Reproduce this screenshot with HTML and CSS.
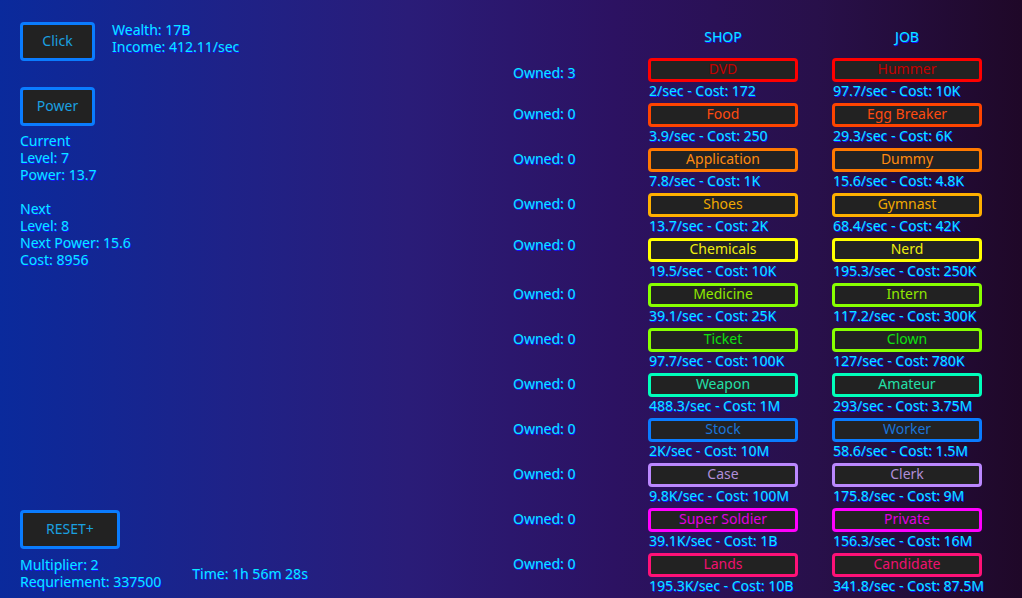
FILE: index.html
```html
<!DOCTYPE html>
<html>
<head>
<meta charset="utf-8">
<link rel="stylesheet" href="styles.css">
</head>
<body>
<div class="page">
  <div class="left">
    <div class="top">
      <div class="click-row">
        <button class="btn btn-click">Click</button>
        <div class="stats">
          <div>Wealth: 17B</div>
          <div>Income: 412.11/sec</div>
        </div>
      </div>
      <button class="btn btn-power">Power</button>
      <div class="power-info">
        <div>Current</div>
        <div>Level: 7</div>
        <div>Power: 13.7</div>
        <div class="blank"></div>
        <div>Next</div>
        <div>Level: 8</div>
        <div>Next Power: 15.6</div>
        <div>Cost: 8956</div>
      </div>
    </div>
    <div class="bottom">
      <button class="btn btn-reset">RESET+</button>
      <div class="reset-row">
        <div class="reset-info">
          <div>Multiplier: 2</div>
          <div>Requriement: 337500</div>
        </div>
        <div class="time">Time: 1h 56m 28s</div>
      </div>
    </div>
  </div>

  <div class="market">
    <div class="heads">
      <div class="owned-head"></div>
      <div class="head">SHOP</div>
      <div class="head">JOB</div>
    </div>

    <div class="row r1">
      <div class="owned">Owned: 3</div>
      <div class="item"><div class="ib c-red">DVD</div><div class="info">2/sec - Cost: 172</div></div>
      <div class="item"><div class="ib c-red">Hummer</div><div class="info">97.7/sec - Cost: 10K</div></div>
    </div>
    <div class="row">
      <div class="owned">Owned: 0</div>
      <div class="item"><div class="ib c-ro">Food</div><div class="info">3.9/sec - Cost: 250</div></div>
      <div class="item"><div class="ib c-ro">Egg Breaker</div><div class="info">29.3/sec - Cost: 6K</div></div>
    </div>
    <div class="row">
      <div class="owned">Owned: 0</div>
      <div class="item"><div class="ib c-orange">Application</div><div class="info">7.8/sec - Cost: 1K</div></div>
      <div class="item"><div class="ib c-orange">Dummy</div><div class="info">15.6/sec - Cost: 4.8K</div></div>
    </div>
    <div class="row">
      <div class="owned">Owned: 0</div>
      <div class="item"><div class="ib c-amber">Shoes</div><div class="info">13.7/sec - Cost: 2K</div></div>
      <div class="item"><div class="ib c-amber">Gymnast</div><div class="info">68.4/sec - Cost: 42K</div></div>
    </div>
    <div class="row r5">
      <div class="owned">Owned: 0</div>
      <div class="item"><div class="ib c-yellow">Chemicals</div><div class="info">19.5/sec - Cost: 10K</div></div>
      <div class="item"><div class="ib c-yellow">Nerd</div><div class="info">195.3/sec - Cost: 250K</div></div>
    </div>
    <div class="row">
      <div class="owned">Owned: 0</div>
      <div class="item"><div class="ib c-lime">Medicine</div><div class="info">39.1/sec - Cost: 25K</div></div>
      <div class="item"><div class="ib c-lime">Intern</div><div class="info">117.2/sec - Cost: 300K</div></div>
    </div>
    <div class="row">
      <div class="owned">Owned: 0</div>
      <div class="item"><div class="ib c-green">Ticket</div><div class="info">97.7/sec - Cost: 100K</div></div>
      <div class="item"><div class="ib c-green">Clown</div><div class="info">127/sec - Cost: 780K</div></div>
    </div>
    <div class="row">
      <div class="owned">Owned: 0</div>
      <div class="item"><div class="ib c-teal">Weapon</div><div class="info">488.3/sec - Cost: 1M</div></div>
      <div class="item"><div class="ib c-teal">Amateur</div><div class="info">293/sec - Cost: 3.75M</div></div>
    </div>
    <div class="row">
      <div class="owned">Owned: 0</div>
      <div class="item"><div class="ib c-blue">Stock</div><div class="info">2K/sec - Cost: 10M</div></div>
      <div class="item"><div class="ib c-blue">Worker</div><div class="info">58.6/sec - Cost: 1.5M</div></div>
    </div>
    <div class="row">
      <div class="owned">Owned: 0</div>
      <div class="item"><div class="ib c-lav">Case</div><div class="info">9.8K/sec - Cost: 100M</div></div>
      <div class="item"><div class="ib c-lav">Clerk</div><div class="info">175.8/sec - Cost: 9M</div></div>
    </div>
    <div class="row">
      <div class="owned">Owned: 0</div>
      <div class="item"><div class="ib c-mag">Super Soldier</div><div class="info">39.1K/sec - Cost: 1B</div></div>
      <div class="item"><div class="ib c-mag">Private</div><div class="info">156.3/sec - Cost: 16M</div></div>
    </div>
    <div class="row">
      <div class="owned">Owned: 0</div>
      <div class="item"><div class="ib c-pink">Lands</div><div class="info">195.3K/sec - Cost: 10B</div></div>
      <div class="item"><div class="ib c-pink">Candidate</div><div class="info">341.8/sec - Cost: 87.5M</div></div>
    </div>
  </div>
</div>
</body>
</html>
```

FILE: styles.css
```css
html, body {
  margin: 0;
  padding: 0;
}
body {
  width: 1022px;
  height: 598px;
  overflow: hidden;
  background: linear-gradient(to right, #0a2a9c 0%, #1e2288 22%, #2a1c78 40%, #2c1262 60%, #28104a 80%, #1f0828 100%);
  font-family: "Noto Sans", "Open Sans", sans-serif;
  font-size: 14px;
  line-height: 17px;
  color: #08eaff;
  text-shadow: 1px 1px 0 #1414ff;
}
.page {
  display: flex;
  height: 598px;
}
.left {
  width: 513px;
  flex: none;
  padding: 22px 0 8px 20px;
  box-sizing: border-box;
  display: flex;
  flex-direction: column;
  justify-content: space-between;
}
.btn {
  font-family: "Noto Sans", "Open Sans", sans-serif;
  font-size: 14px;
  background: #222222;
  color: #1aa0e0;
  border: 3px solid #0a7cff;
  border-radius: 4px;
  height: 39px;
  box-sizing: border-box;
  padding: 0 0 2px 0;
  text-shadow: none;
  display: block;
}
.btn-click, .btn-power { width: 75px; }
.btn-reset { width: 100px; }
.click-row {
  display: flex;
  gap: 17px;
  align-items: flex-start;
}
.stats { margin-top: -1px; }
.btn-power { margin-top: 26px; }
.power-info { margin-top: 6px; }
.blank { height: 17px; }
.reset-row {
  display: flex;
  align-items: center;
  gap: 31px;
  margin-top: 7px;
}
.market {
  padding-top: 28px;
}
.heads, .row {
  display: flex;
  gap: 34px;
}
.heads { height: 30px; }
.head {
  width: 150px;
  text-align: center;
}
.owned-head, .owned { width: 101px; }
.row {
  height: 45px;
}
.owned {
  height: 24px;
  line-height: 22px;
}
.r1 .owned { line-height: 30px; }
.r5 .owned { line-height: 14px; }
.item { width: 150px; }
.ib {
  height: 24px;
  box-sizing: border-box;
  border: 3px solid;
  border-radius: 4px;
  background: #222222;
  text-align: center;
  line-height: 15px;
  text-shadow: none;
}
.info {
  padding-left: 1px;
  white-space: nowrap;
}
.c-red { border-color: #ff0000; color: #c40000; }
.c-ro { border-color: #ff4400; color: #ff4a10; }
.c-orange { border-color: #ff7a00; color: #ff8a10; }
.c-amber { border-color: #ffb000; color: #f0a800; }
.c-yellow { border-color: #ffff00; color: #eeee10; }
.c-lime { border-color: #88ff00; color: #90e800; }
.c-green { border-color: #88ff00; color: #10e010; }
.c-teal { border-color: #00ffbb; color: #22e0a8; }
.c-blue { border-color: #0a7cff; color: #1a74d8; }
.c-lav { border-color: #bb88ff; color: #b08ed8; }
.c-mag { border-color: #ff00ff; color: #e000e0; }
.c-pink { border-color: #ff1177; color: #f01070; }
```
